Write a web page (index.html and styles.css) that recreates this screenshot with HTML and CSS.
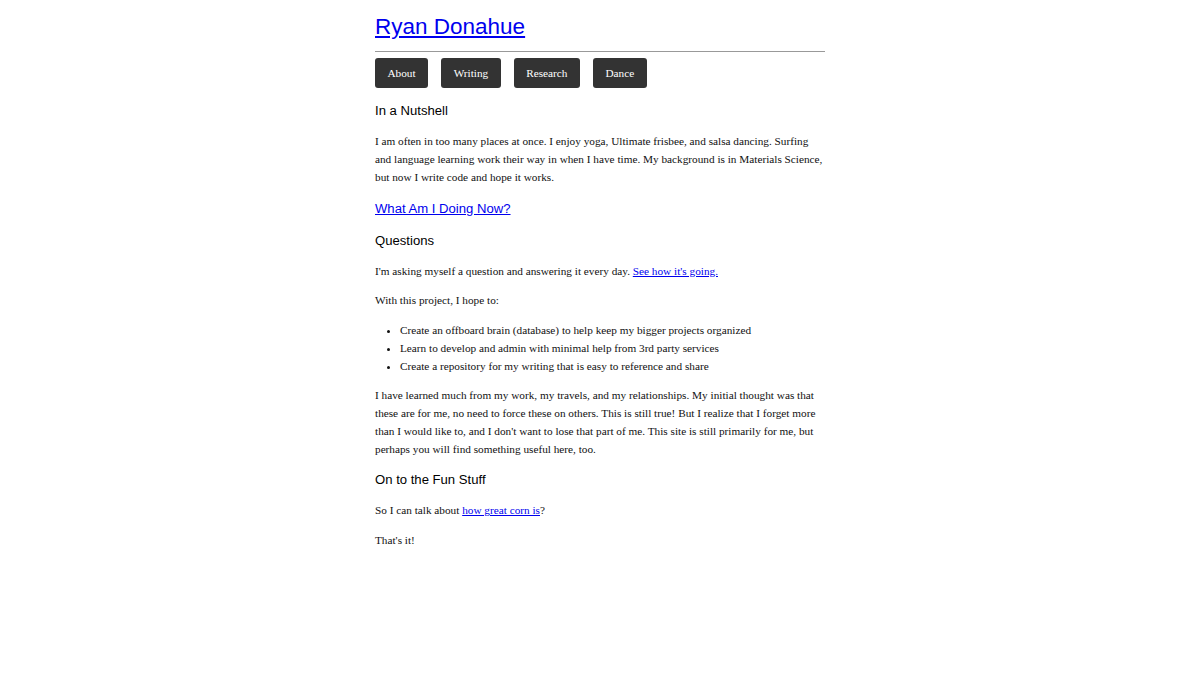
FILE: index.html
```html
<!DOCTYPE html>
<html>
<head>
<meta charset="utf-8">
<link rel="stylesheet" href="styles.css">
</head>
<body>
<div class="page">
  <header class="header">
    <h1 class="title"><a href="#">Ryan Donahue</a></h1>
    <hr class="rule">
    <nav class="nav">
      <a class="btn" href="#">About</a>
      <a class="btn" href="#">Writing</a>
      <a class="btn" href="#">Research</a>
      <a class="btn" href="#">Dance</a>
    </nav>
  </header>
  <main class="content">
    <h2 class="heading">In a Nutshell</h2>
    <p>I am often in too many places at once. I enjoy yoga, Ultimate frisbee, and salsa dancing. Surfing and language learning work their way in when I have time. My background is in Materials Science, but now I write code and hope it works.</p>
    <h2 class="heading"><a href="#">What Am I Doing Now?</a></h2>
    <h2 class="heading">Questions</h2>
    <p>I'm asking myself a question and answering it every day. <a href="#">See how it's going.</a></p>
    <p>With this project, I hope to:</p>
    <ul class="list">
      <li>Create an offboard brain (database) to help keep my bigger projects organized</li>
      <li>Learn to develop and admin with minimal help from 3rd party services</li>
      <li>Create a repository for my writing that is easy to reference and share</li>
    </ul>
    <p>I have learned much from my work, my travels, and my relationships. My initial thought was that these are for me, no need to force these on others. This is still true! But I realize that I forget more than I would like to, and I don't want to lose that part of me. This site is still primarily for me, but perhaps you will find something useful here, too.</p>
    <h2 class="heading">On to the Fun Stuff</h2>
    <p>So I can talk about <a href="#">how great corn is</a>?</p>
    <p>That's it!</p>
  </main>
</div>
</body>
</html>
```
FILE: styles.css
```css
html, body {
  margin: 0;
  padding: 0;
  background: #fff;
}
body {
  font-family: "Liberation Serif", "Times New Roman", serif;
  font-size: 11.25px;
  line-height: 18px;
  color: #111;
}
a {
  color: #0000ee;
}
.page {
  width: 450px;
  margin: 0 auto;
}
.title {
  font-family: "Liberation Sans", Arial, sans-serif;
  font-size: 22.5px;
  font-weight: normal;
  line-height: 28px;
  margin: 13px 0 0;
}
.rule {
  border: 0;
  border-top: 1px solid #999;
  margin: 10px 0 6px;
}
.nav {
  display: flex;
  gap: 13px;
}
.btn {
  display: block;
  background: #333;
  color: #fff;
  text-decoration: none;
  font-size: 11.25px;
  line-height: 30px;
  height: 30px;
  padding: 0 12.5px;
  border-radius: 3px;
}
.content {
  padding-top: 12px;
}
.heading {
  font-family: "Liberation Sans", Arial, sans-serif;
  font-size: 13.125px;
  font-weight: normal;
  line-height: 21px;
  margin: 11.25px 0;
  color: #000;
}
.content > .heading:first-child {
  margin-top: 0;
}
p {
  margin: 11.25px 0;
}
.list {
  margin: 11.25px 0;
  padding-left: 25px;
}
```
